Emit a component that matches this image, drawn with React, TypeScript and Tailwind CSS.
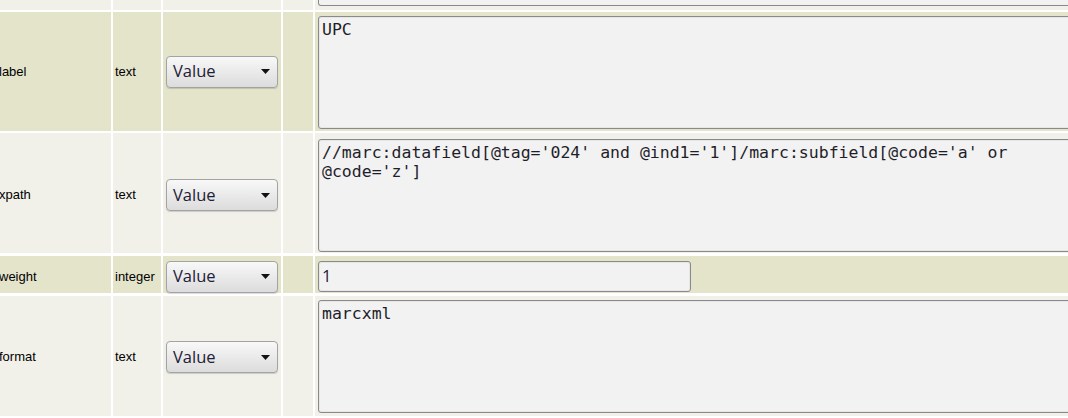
type Row = {
  name: string;
  type: string;
  value: string;
  kind: "area" | "input";
  tone: "olive" | "light";
  h: string;
  shift: string;
  areaTop: string;
};

const rows: Row[] = [
  { name: "label", type: "text", value: "UPC", kind: "area", tone: "olive", h: "h-[119px]", shift: "", areaTop: "pt-[4px]" },
  {
    name: "xpath",
    type: "text",
    value: "//marc:datafield[@tag='024' and @ind1='1']/marc:subfield[@code='a' or @code='z']",
    kind: "area",
    tone: "light",
    h: "h-[120px]",
    shift: "pt-[4px]",
    areaTop: "pt-[6px]",
  },
  { name: "weight", type: "integer", value: "1", kind: "input", tone: "olive", h: "h-[37px]", shift: "pt-[4px]", areaTop: "pt-[5px]" },
  { name: "format", type: "text", value: "marcxml", kind: "area", tone: "light", h: "h-[120px]", shift: "pt-[2px]", areaTop: "pt-[4px]" },
];

const cols = "grid grid-cols-[111px_48px_118px_30px_800px] gap-x-[2px]";

function ValueSelect() {
  return (
    <div className="flex h-[32px] w-[112px] items-center justify-between rounded-[4px] border border-[#a3a3a3] bg-gradient-to-b from-[#f8f8f8] to-[#dcdcdc] pl-[6px] pr-[6px] shadow-[0_1px_1px_rgba(0,0,0,0.15)]">
      <span className="text-[16.5px] leading-none text-[#1e2035] [font-family:'Open_Sans',sans-serif]">Value</span>
      <svg width="9" height="5" viewBox="0 0 9 5" className="mr-[1px]">
        <path d="M0 0h9L4.5 5z" fill="#111" />
      </svg>
    </div>
  );
}

export default function App() {
  const bg = (t: Row["tone"]) => (t === "olive" ? "bg-[#e4e4cb]" : "bg-[#f1f1e9]");

  return (
    <div className="h-[418px] w-[1068px] overflow-hidden bg-white [font-family:'Liberation_Sans',Arial,sans-serif]">
      <div className="flex flex-col gap-y-[2px]">
        {/* tail of the previous row */}
        <div className={`${cols} h-[10px]`}>
          <div className="bg-[#f1f1e9]" />
          <div className="bg-[#f1f1e9]" />
          <div className="bg-[#f1f1e9]" />
          <div className="bg-[#f1f1e9]" />
          <div className="bg-[#f1f1e9] pl-[3px]">
            <div className="h-[6px] w-[780px] rounded-b-[3px] border border-t-0 border-[#8a8a8a] bg-[#f2f2f2]" />
          </div>
        </div>

        {rows.map((r, i) => (
          <div key={r.name} className={`${cols} ${r.h} ${i >= 2 ? "mt-px" : ""}`}>
            <div className={`${bg(r.tone)} ${r.shift} flex items-center text-[13px] text-black`}>
              <span className="-ml-px">{r.name}</span>
            </div>
            <div className={`${bg(r.tone)} ${r.shift} flex items-center pl-[2px] text-[13px] text-black`}>
              {r.type}
            </div>
            <div className={`${bg(r.tone)} ${r.kind === "input" ? "pt-[4px]" : r.shift} flex items-center pl-[3px]`}>
              <ValueSelect />
            </div>
            <div className={bg(r.tone)} />
            <div className={`${bg(r.tone)} pl-[3px] ${r.areaTop}`}>
              {r.kind === "area" ? (
                <div className="h-[113px] w-[780px] whitespace-pre-wrap break-words rounded-[3px] border border-[#8a8a8a] bg-[#f2f2f2] px-[3px] pt-[3px] text-[16.5px] leading-[19px] text-[#1e1e2a] shadow-[inset_0_0_0_1px_#e6e6e6] [font-family:'DejaVu_Sans_Mono',monospace]">
                  {r.value}
                </div>
              ) : (
                <div className="flex h-[31px] w-[373px] items-center rounded-[3px] border border-[#8a8a8a] bg-[#f2f2f2] px-[3px] text-[16.5px] text-[#1e2035] shadow-[inset_0_0_0_1px_#e6e6e6] [font-family:'Open_Sans',sans-serif]">
                  {r.value}
                </div>
              )}
            </div>
          </div>
        ))}
        <div className={`${cols} h-[10px]`}>
          <div className="bg-[#e4e4cb]" />
          <div className="bg-[#e4e4cb]" />
          <div className="bg-[#e4e4cb]" />
          <div className="bg-[#e4e4cb]" />
          <div className="bg-[#e4e4cb]" />
        </div>
      </div>
    </div>
  );
}
